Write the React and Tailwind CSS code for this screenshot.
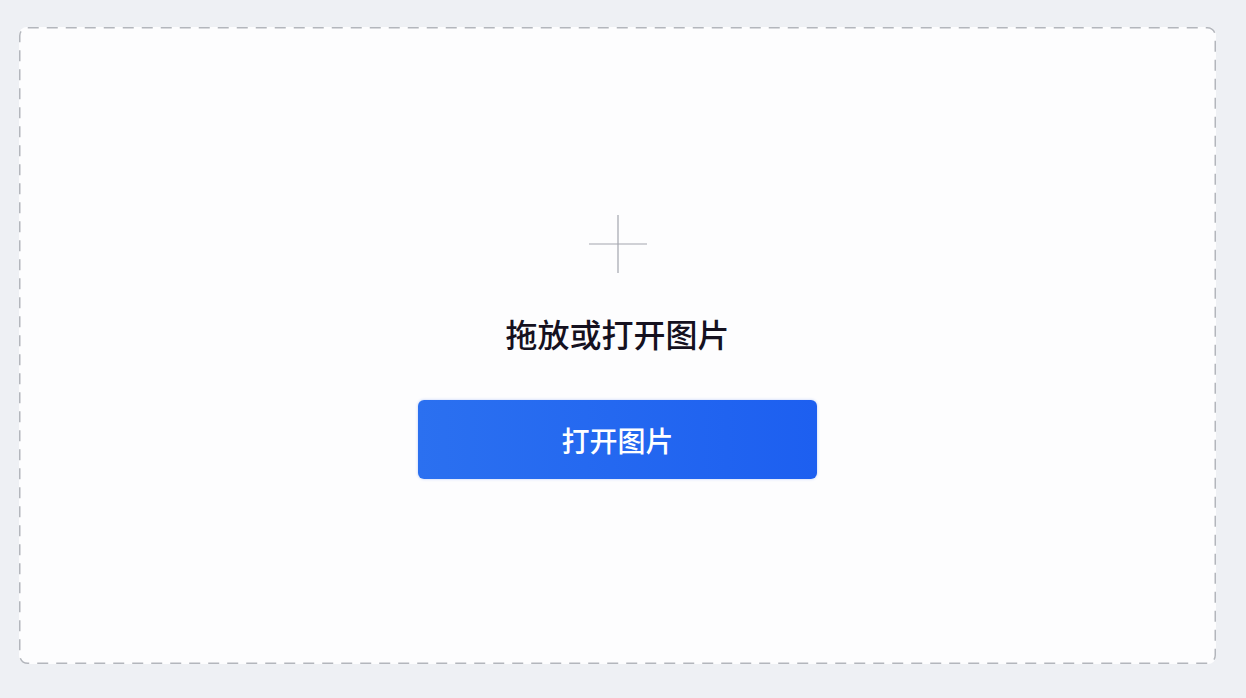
export default function App() {
  return (
    <div
      className="w-[1246px] h-[698px] bg-[#eef0f4] pl-[19px] pt-[27px] pr-[30px] pb-[34px]"
      style={{ fontFamily: '"Noto Sans CJK SC", "Noto Sans", sans-serif' }}
    >
      <div className="relative w-full h-full rounded-[8px] bg-[#fdfdfe] flex flex-col items-center">
        <svg className="absolute inset-0 w-full h-full pointer-events-none" preserveAspectRatio="none">
          <rect
            x="0.75"
            y="0.75"
            width="calc(100% - 1.5px)"
            height="calc(100% - 1.5px)"
            rx="8"
            ry="8"
            fill="none"
            stroke="#b3b6bc"
            strokeWidth="1.5"
            strokeDasharray="11 8"
          />
        </svg>
        <svg className="mt-[188px]" width="58" height="58" viewBox="0 0 58 58">
          <line x1="29" y1="0" x2="29" y2="58" stroke="#a3a6ad" strokeWidth="1.2" />
          <line x1="0" y1="29" x2="58" y2="29" stroke="#a3a6ad" strokeWidth="1.2" />
        </svg>
        <div className="mt-[40px] text-[32px] leading-[40px] text-[#15111f] font-medium">拖放或打开图片</div>
        <button className="mt-[47px] w-[399px] h-[79px] rounded-[6px] bg-gradient-to-r from-[#2b70f0] to-[#1d5ff0] text-white text-[28px] font-medium flex items-center justify-center shadow-[0_0_3px_rgba(30,90,240,0.3)]">
          打开图片
        </button>
      </div>
    </div>
  );
}
